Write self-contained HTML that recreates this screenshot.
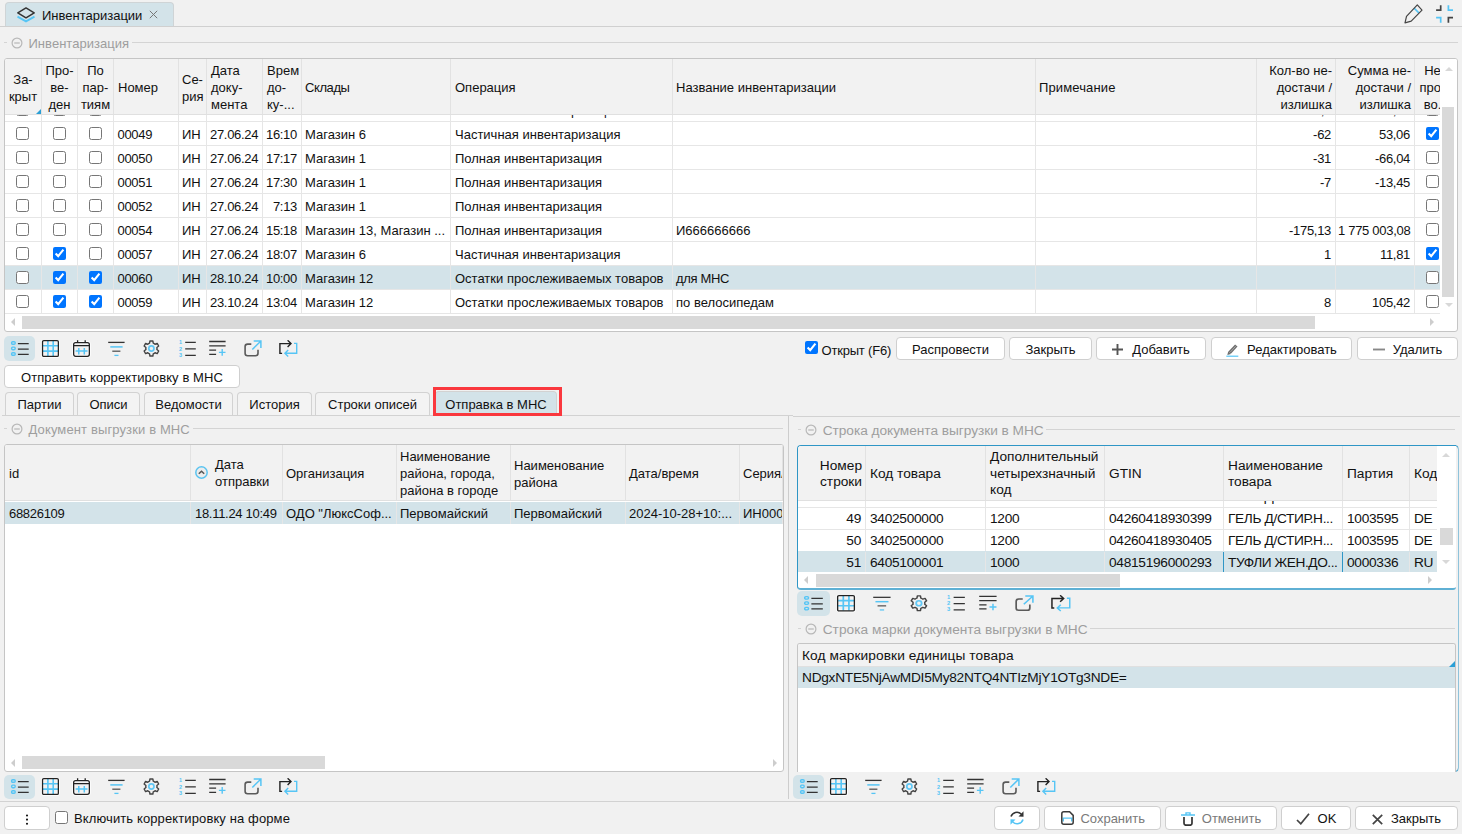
<!DOCTYPE html>
<html><head><meta charset="utf-8"><title>Инвентаризации</title>
<style>
*{box-sizing:border-box;margin:0;padding:0}
html,body{width:1462px;height:834px;overflow:hidden;background:#f1f1f1}
body{position:relative;font-family:"Liberation Sans",sans-serif;font-size:13px;color:#111;line-height:17px}
.abs,.sel,.ic,.lgline,.lgic,.lgtx,.btn,.tab,.tbl,.hc,.c,.row,.vl,.hl,.cb,.txt,.sb{position:absolute}
.sel{background:#d3e3e9;border-radius:5px}
.ic svg,.abs>svg,.lgic svg{display:block}
.lgline{height:1px;background:#d4d4d4}
.lgtx{color:#9e9e9e;font-size:13px;white-space:nowrap;line-height:17px}
.btn{height:23px;background:#fff;border:1px solid #cfcfcf;border-radius:4px;white-space:nowrap;line-height:21px;text-align:center;padding-top:1px}
.btn.dis{color:#7a7a7a}
.tab{height:23px;border:1px solid #d2d2d2;border-bottom:none;border-radius:4px 4px 0 0;background:#f3f3f3;white-space:nowrap;line-height:23px;text-align:center}
.tbl{background:#fff;border:1px solid #c5c5c5;border-radius:3px;overflow:hidden}
.hd{position:absolute;left:0;top:0;background:#f2f2f2;border-bottom:1px solid #e0e0e0}
.hc{top:0;padding-top:4px;border-right:1px solid #e2e2e2;display:flex;align-items:center;padding:0 3px 0 4px;overflow:hidden;white-space:nowrap}
.hc.ctr{justify-content:center;text-align:center;padding:0}
.hc.rt{justify-content:flex-end;text-align:right}
.row{left:0;border-bottom:1px solid #e6e6e6}
.row.s{background:#d3e3e9}
.c{top:0;height:100%;border-right:1px solid #e6e6e6;padding:0 2px 0 4px;white-space:nowrap;overflow:hidden}
.c.ell{text-overflow:ellipsis}
.c.p5,.hc.p5{padding-left:4px}
.c.p3,.hc.p3{padding-left:3px}
.c.r3{padding-right:3px}
.c.p35{padding-left:3.5px}
.row.t{border-bottom:none;border-top:1px solid #e6e6e6}
.c.foc{box-shadow:-1px 0 0 #2f96c6;border-right-color:#2f96c6}
.row.t.s{border-top-color:#d3e3e9}
.bi{display:inline-block;vertical-align:-2px;margin-right:8px}
.c.r{text-align:right;padding:0 4px 0 2px}
.cb{width:13px;height:13px;margin:0}
.sb{background:#d9d9d9}
.txt{white-space:nowrap}
.num{letter-spacing:-0.3px}
.dn1 .hc>div{position:relative;top:1px}
.big{font-size:13.7px}
.big .hc{line-height:16.5px}
.big .num{letter-spacing:-0.28px}
</style></head><body>

<div class="abs" style="left:0;top:26px;width:1462px;height:1px;background:#d0d0d0"></div>
<div class="abs" style="left:5px;top:2px;width:169px;height:24px;background:#d3e3e9;border:1px solid #cfd4d6;border-bottom:none;border-radius:4px 4px 0 0"></div>
<div class="abs" style="left:16px;top:6px"><svg width="20" height="18" viewBox="0 0 20 18"><path d="M1.500 10.600L10 15.400L18.500 10.600" fill="none" stroke="#56c5f5" stroke-width="1.800"/><path d="M10 1.900L18.200 6.800L10 11.800L1.800 6.800Z" fill="none" stroke="#333" stroke-width="1.500" stroke-linejoin="round"/></svg></div>
<div class="txt" style="left:42px;top:7px;font-size:13px">Инвентаризации</div>
<div class="abs" style="left:149px;top:10px"><svg width="9" height="9" viewBox="0 0 9 9"><path d="M0.800 0.800L8.200 8.200M8.200 0.800L0.800 8.200" stroke="#777" stroke-width="1"/></svg></div>
<div class="abs" style="left:1403px;top:4px"><svg width="21" height="21" viewBox="0 0 21 21"><path d="M11.100 4.100L16.100 9.100" stroke="#56c5f5" stroke-width="1.500" fill="none"/><path d="M14.300 0.900L19 6.100L8.200 17.200L2 18.900L3.500 12.300Z" fill="none" stroke="#444" stroke-width="1.200" stroke-linejoin="round"/></svg></div>
<div class="abs" style="left:1435px;top:4px"><svg width="19" height="20" viewBox="0 0 19 20"><g fill="none" stroke-width="1.700"><path d="M1.100 6.100H5.700V1.200" stroke="#444"/><path d="M18 6.100H13.400V1.200" stroke="#56c5f5"/><path d="M1.100 13.700H5.700V18.700" stroke="#56c5f5"/><path d="M18 13.700H13.400V18.700" stroke="#444"/></g></svg></div>
<div class="lgline" style="left:4px;top:42px;width:3px"></div>
<div class="lgic" style="left:11px;top:37px"><svg width="12" height="12" viewBox="0 0 12 12"><circle cx="6" cy="6" r="4.900" fill="none" stroke="#b8b8b8" stroke-width="1.200"/><path d="M3.200 6H8.800" stroke="#b8b8b8" stroke-width="1.200"/></svg></div>
<div class="lgtx" style="left:28.5px;top:35px"><span style="letter-spacing:0.031px">Инвентаризация</span></div>
<div class="lgline" style="left:132px;top:42px;width:1326px"></div>
<div class="tbl dn1" style="left:4px;top:58px;width:1454px;height:274px">
<div class="row" style="top:39px;width:1435px;height:24px;line-height:25px">
<div class="c" style="left:0px;width:37px;padding:0"><input type="checkbox" class="cb" style="left:11px;top:5px"></div>
<div class="c" style="left:37px;width:36px;padding:0"><input type="checkbox" class="cb" style="left:11px;top:5px"></div>
<div class="c" style="left:73px;width:36px;padding:0"><input type="checkbox" class="cb" style="left:11px;top:5px"></div>
<div class="c p35 num" style="left:109px;width:65px">00048</div>
<div class="c p3" style="left:174px;width:28px">ИН</div>
<div class="c p3 num" style="left:202px;width:56px">27.06.24</div>
<div class="c r r3 num" style="left:258px;width:39px">15:40</div>
<div class="c p3 ell" style="left:297px;width:149px">Магазин 6</div>
<div class="c " style="left:446px;width:222px">Частичная инвентаризация</div>
<div class="c p3" style="left:668px;width:363px"></div>
<div class="c p3" style="left:1031px;width:221px"></div>
<div class="c r num" style="left:1252px;width:79px">-4,5</div>
<div class="c r num" style="left:1331px;width:79px">-7,21</div>
<div class="c" style="left:1410px;width:36px;padding:0;border-right:none"><input type="checkbox" class="cb" style="left:11px;top:5px"></div>
</div>
<div class="row" style="top:63px;width:1435px;height:24px;line-height:25px">
<div class="c" style="left:0px;width:37px;padding:0"><input type="checkbox" class="cb" style="left:11px;top:5px"></div>
<div class="c" style="left:37px;width:36px;padding:0"><input type="checkbox" class="cb" style="left:11px;top:5px"></div>
<div class="c" style="left:73px;width:36px;padding:0"><input type="checkbox" class="cb" style="left:11px;top:5px"></div>
<div class="c p35 num" style="left:109px;width:65px">00049</div>
<div class="c p3" style="left:174px;width:28px">ИН</div>
<div class="c p3 num" style="left:202px;width:56px">27.06.24</div>
<div class="c r r3 num" style="left:258px;width:39px">16:10</div>
<div class="c p3 ell" style="left:297px;width:149px">Магазин 6</div>
<div class="c " style="left:446px;width:222px">Частичная инвентаризация</div>
<div class="c p3" style="left:668px;width:363px"></div>
<div class="c p3" style="left:1031px;width:221px"></div>
<div class="c r num" style="left:1252px;width:79px">-62</div>
<div class="c r num" style="left:1331px;width:79px">53,06</div>
<div class="c" style="left:1410px;width:36px;padding:0;border-right:none"><input type="checkbox" class="cb" style="left:11px;top:5px" checked></div>
</div>
<div class="row" style="top:87px;width:1435px;height:24px;line-height:25px">
<div class="c" style="left:0px;width:37px;padding:0"><input type="checkbox" class="cb" style="left:11px;top:5px"></div>
<div class="c" style="left:37px;width:36px;padding:0"><input type="checkbox" class="cb" style="left:11px;top:5px"></div>
<div class="c" style="left:73px;width:36px;padding:0"><input type="checkbox" class="cb" style="left:11px;top:5px"></div>
<div class="c p35 num" style="left:109px;width:65px">00050</div>
<div class="c p3" style="left:174px;width:28px">ИН</div>
<div class="c p3 num" style="left:202px;width:56px">27.06.24</div>
<div class="c r r3 num" style="left:258px;width:39px">17:17</div>
<div class="c p3 ell" style="left:297px;width:149px">Магазин 1</div>
<div class="c " style="left:446px;width:222px">Полная инвентаризация</div>
<div class="c p3" style="left:668px;width:363px"></div>
<div class="c p3" style="left:1031px;width:221px"></div>
<div class="c r num" style="left:1252px;width:79px">-31</div>
<div class="c r num" style="left:1331px;width:79px">-66,04</div>
<div class="c" style="left:1410px;width:36px;padding:0;border-right:none"><input type="checkbox" class="cb" style="left:11px;top:5px"></div>
</div>
<div class="row" style="top:111px;width:1435px;height:24px;line-height:25px">
<div class="c" style="left:0px;width:37px;padding:0"><input type="checkbox" class="cb" style="left:11px;top:5px"></div>
<div class="c" style="left:37px;width:36px;padding:0"><input type="checkbox" class="cb" style="left:11px;top:5px"></div>
<div class="c" style="left:73px;width:36px;padding:0"><input type="checkbox" class="cb" style="left:11px;top:5px"></div>
<div class="c p35 num" style="left:109px;width:65px">00051</div>
<div class="c p3" style="left:174px;width:28px">ИН</div>
<div class="c p3 num" style="left:202px;width:56px">27.06.24</div>
<div class="c r r3 num" style="left:258px;width:39px">17:30</div>
<div class="c p3 ell" style="left:297px;width:149px">Магазин 1</div>
<div class="c " style="left:446px;width:222px">Полная инвентаризация</div>
<div class="c p3" style="left:668px;width:363px"></div>
<div class="c p3" style="left:1031px;width:221px"></div>
<div class="c r num" style="left:1252px;width:79px">-7</div>
<div class="c r num" style="left:1331px;width:79px">-13,45</div>
<div class="c" style="left:1410px;width:36px;padding:0;border-right:none"><input type="checkbox" class="cb" style="left:11px;top:5px"></div>
</div>
<div class="row" style="top:135px;width:1435px;height:24px;line-height:25px">
<div class="c" style="left:0px;width:37px;padding:0"><input type="checkbox" class="cb" style="left:11px;top:5px"></div>
<div class="c" style="left:37px;width:36px;padding:0"><input type="checkbox" class="cb" style="left:11px;top:5px"></div>
<div class="c" style="left:73px;width:36px;padding:0"><input type="checkbox" class="cb" style="left:11px;top:5px"></div>
<div class="c p35 num" style="left:109px;width:65px">00052</div>
<div class="c p3" style="left:174px;width:28px">ИН</div>
<div class="c p3 num" style="left:202px;width:56px">27.06.24</div>
<div class="c r r3 num" style="left:258px;width:39px">7:13</div>
<div class="c p3 ell" style="left:297px;width:149px">Магазин 1</div>
<div class="c " style="left:446px;width:222px">Полная инвентаризация</div>
<div class="c p3" style="left:668px;width:363px"></div>
<div class="c p3" style="left:1031px;width:221px"></div>
<div class="c r num" style="left:1252px;width:79px"></div>
<div class="c r num" style="left:1331px;width:79px"></div>
<div class="c" style="left:1410px;width:36px;padding:0;border-right:none"><input type="checkbox" class="cb" style="left:11px;top:5px"></div>
</div>
<div class="row" style="top:159px;width:1435px;height:24px;line-height:25px">
<div class="c" style="left:0px;width:37px;padding:0"><input type="checkbox" class="cb" style="left:11px;top:5px"></div>
<div class="c" style="left:37px;width:36px;padding:0"><input type="checkbox" class="cb" style="left:11px;top:5px"></div>
<div class="c" style="left:73px;width:36px;padding:0"><input type="checkbox" class="cb" style="left:11px;top:5px"></div>
<div class="c p35 num" style="left:109px;width:65px">00054</div>
<div class="c p3" style="left:174px;width:28px">ИН</div>
<div class="c p3 num" style="left:202px;width:56px">27.06.24</div>
<div class="c r r3 num" style="left:258px;width:39px">15:18</div>
<div class="c p3 ell" style="left:297px;width:149px">Магазин 13, Магазин ...</div>
<div class="c " style="left:446px;width:222px">Полная инвентаризация</div>
<div class="c p3" style="left:668px;width:363px">И666666666</div>
<div class="c p3" style="left:1031px;width:221px"></div>
<div class="c r num" style="left:1252px;width:79px">-175,13</div>
<div class="c r num" style="left:1331px;width:79px">1 775 003,08</div>
<div class="c" style="left:1410px;width:36px;padding:0;border-right:none"><input type="checkbox" class="cb" style="left:11px;top:5px"></div>
</div>
<div class="row" style="top:183px;width:1435px;height:24px;line-height:25px">
<div class="c" style="left:0px;width:37px;padding:0"><input type="checkbox" class="cb" style="left:11px;top:5px"></div>
<div class="c" style="left:37px;width:36px;padding:0"><input type="checkbox" class="cb" style="left:11px;top:5px" checked></div>
<div class="c" style="left:73px;width:36px;padding:0"><input type="checkbox" class="cb" style="left:11px;top:5px"></div>
<div class="c p35 num" style="left:109px;width:65px">00057</div>
<div class="c p3" style="left:174px;width:28px">ИН</div>
<div class="c p3 num" style="left:202px;width:56px">27.06.24</div>
<div class="c r r3 num" style="left:258px;width:39px">18:07</div>
<div class="c p3 ell" style="left:297px;width:149px">Магазин 6</div>
<div class="c " style="left:446px;width:222px">Частичная инвентаризация</div>
<div class="c p3" style="left:668px;width:363px"></div>
<div class="c p3" style="left:1031px;width:221px"></div>
<div class="c r num" style="left:1252px;width:79px">1</div>
<div class="c r num" style="left:1331px;width:79px">11,81</div>
<div class="c" style="left:1410px;width:36px;padding:0;border-right:none"><input type="checkbox" class="cb" style="left:11px;top:5px" checked></div>
</div>
<div class="row s" style="top:207px;width:1435px;height:24px;line-height:25px">
<div class="c" style="left:0px;width:37px;padding:0"><input type="checkbox" class="cb" style="left:11px;top:5px"></div>
<div class="c" style="left:37px;width:36px;padding:0"><input type="checkbox" class="cb" style="left:11px;top:5px" checked></div>
<div class="c" style="left:73px;width:36px;padding:0"><input type="checkbox" class="cb" style="left:11px;top:5px" checked></div>
<div class="c p35 num" style="left:109px;width:65px">00060</div>
<div class="c p3" style="left:174px;width:28px">ИН</div>
<div class="c p3 num" style="left:202px;width:56px">28.10.24</div>
<div class="c r r3 num" style="left:258px;width:39px">10:00</div>
<div class="c p3 ell" style="left:297px;width:149px">Магазин 12</div>
<div class="c " style="left:446px;width:222px">Остатки прослеживаемых товаров</div>
<div class="c p3" style="left:668px;width:363px"><span style="letter-spacing:-0.320px">для МНС</span></div>
<div class="c p3" style="left:1031px;width:221px"></div>
<div class="c r num" style="left:1252px;width:79px"></div>
<div class="c r num" style="left:1331px;width:79px"></div>
<div class="c" style="left:1410px;width:36px;padding:0;border-right:none"><input type="checkbox" class="cb" style="left:11px;top:5px"></div>
</div>
<div class="row" style="top:231px;width:1435px;height:24px;line-height:25px">
<div class="c" style="left:0px;width:37px;padding:0"><input type="checkbox" class="cb" style="left:11px;top:5px"></div>
<div class="c" style="left:37px;width:36px;padding:0"><input type="checkbox" class="cb" style="left:11px;top:5px" checked></div>
<div class="c" style="left:73px;width:36px;padding:0"><input type="checkbox" class="cb" style="left:11px;top:5px" checked></div>
<div class="c p35 num" style="left:109px;width:65px">00059</div>
<div class="c p3" style="left:174px;width:28px">ИН</div>
<div class="c p3 num" style="left:202px;width:56px">23.10.24</div>
<div class="c r r3 num" style="left:258px;width:39px">13:04</div>
<div class="c p3 ell" style="left:297px;width:149px">Магазин 12</div>
<div class="c " style="left:446px;width:222px">Остатки прослеживаемых товаров</div>
<div class="c p3" style="left:668px;width:363px">по велосипедам</div>
<div class="c p3" style="left:1031px;width:221px"></div>
<div class="c r num" style="left:1252px;width:79px">8</div>
<div class="c r num" style="left:1331px;width:79px">105,42</div>
<div class="c" style="left:1410px;width:36px;padding:0;border-right:none"><input type="checkbox" class="cb" style="left:11px;top:5px"></div>
</div>
<div class="hd" style="width:1435px;height:56px">
<div class="hc ctr" style="left:0px;width:37px;height:55px"><div>За-<br>крыт</div></div>
<div class="hc ctr" style="left:37px;width:36px;height:55px"><div>Про-<br>ве-<br>ден</div></div>
<div class="hc ctr" style="left:73px;width:36px;height:55px"><div>По<br>пар-<br>тиям</div></div>
<div class="hc " style="left:109px;width:65px;height:55px"><div>Номер</div></div>
<div class="hc p3" style="left:174px;width:28px;height:55px"><div>Се-<br>рия</div></div>
<div class="hc " style="left:202px;width:56px;height:55px"><div>Дата<br>доку-<br>мента</div></div>
<div class="hc " style="left:258px;width:39px;height:55px"><div>Врем<br>до-<br>ку-...</div></div>
<div class="hc p3" style="left:297px;width:149px;height:55px"><div><span style="letter-spacing:-0.411px">Склады</span></div></div>
<div class="hc " style="left:446px;width:222px;height:55px"><div>Операция</div></div>
<div class="hc p3" style="left:668px;width:363px;height:55px"><div>Название инвентаризации</div></div>
<div class="hc p3" style="left:1031px;width:221px;height:55px"><div><span style="letter-spacing:0.125px">Примечание</span></div></div>
<div class="hc rt" style="left:1252px;width:79px;height:55px"><div>Кол-во не-<br>достачи /<br>излишка</div></div>
<div class="hc rt" style="left:1331px;width:79px;height:55px"><div>Сумма не-<br>достачи /<br>излишка</div></div>
<div class="hc ctr" style="left:1410px;width:36px;height:55px"><div>Не<br>про-<br>&nbsp;во..</div></div>
<svg class="abs" style="left:31px;top:50px" width="5" height="5"><polygon points="5,0 5,5 0,5" fill="#2a9fd6"/></svg>
</div>
<div class="abs" style="left:1435px;top:0;width:17px;height:255px;background:#fff"></div>
<div class="sb" style="left:1437px;top:48px;width:12px;height:190px"></div>
<svg class="abs" style="left:1440px;top:8px" width="8" height="4"><polygon points="0,4 8,4 4,0" fill="#d8d8d8"/></svg>
<svg class="abs" style="left:1440px;top:244px" width="8" height="4"><polygon points="0,0 8,0 4,4" fill="#d8d8d8"/></svg>
<div class="sb" style="left:17px;top:257px;width:1293px;height:13px"></div>
<svg class="abs" style="left:6px;top:259px" width="4" height="8"><polygon points="4,0 4,8 0,4" fill="#cdcdcd"/></svg>
<svg class="abs" style="left:1425px;top:259px" width="4" height="8"><polygon points="0,0 0,8 4,4" fill="#cdcdcd"/></svg>
</div>
<div class="sel" style="left:4px;top:336px;width:31px;height:25px"></div>
<div class="ic" style="left:10px;top:340px"><svg width="20" height="18" viewBox="0 0 20 18"><g fill="none" stroke="#56c5f5" stroke-width="1.400"><rect x="1.600" y="1.700" width="3.600" height="2.600" rx="1.100"/><rect x="1.600" y="7.100" width="3.600" height="2.600" rx="1.100"/><rect x="1.600" y="12.700" width="3.600" height="2.600" rx="1.100"/></g><g stroke="#333" stroke-width="1.300"><path d="M7.900 3.600H18.700M7.900 9.100H18.700M7.900 14.400H18.700"/></g></svg></div>
<div class="ic" style="left:41px;top:340px"><svg width="20" height="18" viewBox="0 0 20 18"><rect x="1.550" y="0.650" width="15.800" height="15.700" rx="1.200" fill="none" stroke="#fff" stroke-width="3.200" opacity="0.750"/><g stroke="#56c5f5" stroke-width="1.600"><path d="M6.900 1V16M12.200 1V16M2 5.800H17M2 11.100H17"/></g><rect x="1.550" y="0.650" width="15.800" height="15.700" rx="1.200" fill="none" stroke="#222" stroke-width="1.300"/></svg></div>
<div class="ic" style="left:72px;top:340px"><svg width="20" height="18" viewBox="0 0 20 18"><rect x="1.650" y="2.550" width="15.700" height="13.800" rx="2" fill="none" stroke="#fff" stroke-width="3.200" opacity="0.750"/><g stroke="#56c5f5" stroke-width="1.500" fill="none"><path d="M3.600 11.100H15.500M6.800 8V14.500M12.300 8V14.500"/></g><g fill="none" stroke="#222" stroke-width="1.300"><rect x="1.650" y="2.550" width="15.700" height="13.800" rx="2"/><path d="M1.650 5.700H17.350M5.600 0.200V2.600M13.200 0.200V2.600"/></g></svg></div>
<div class="ic" style="left:108px;top:340px"><svg width="20" height="18" viewBox="0 0 20 18"><g fill="none" stroke-width="1.300"><path d="M0.200 2.400H16.600" stroke="#333"/><path d="M2.300 6.900H14.600" stroke="#56c5f5" stroke-width="1.500"/><path d="M4.300 11.200H12.400" stroke="#555"/><path d="M6.400 15.400H10.500" stroke="#56c5f5"/></g></svg></div>
<div class="ic" style="left:143px;top:340px"><svg width="20" height="18" viewBox="0 0 20 18"><circle cx="8.400" cy="8.500" r="2.600" fill="none" stroke="#62c8f5" stroke-width="1.700"/><path fill="none" stroke="#444" stroke-width="1.400" stroke-linejoin="round" d="M6.58 3.21L6.93 0.94L9.87 0.94L10.22 3.21A5.6 5.6 0 0 1 12.07 4.27L14.21 3.45L15.68 5.99L13.90 7.43A5.6 5.6 0 0 1 13.90 9.57L15.68 11.01L14.21 13.55L12.07 12.73A5.6 5.6 0 0 1 10.22 13.79L9.87 16.06L6.93 16.06L6.58 13.79A5.6 5.6 0 0 1 4.73 12.73L2.59 13.55L1.12 11.01L2.90 9.57A5.6 5.6 0 0 1 2.90 7.43L1.12 5.99L2.59 3.45L4.73 4.27A5.6 5.6 0 0 1 6.58 3.21Z"/></svg></div>
<div class="ic" style="left:178px;top:340px"><svg width="20" height="18" viewBox="0 0 20 18"><g fill="#56c5f5" font-family="Liberation Sans" font-weight="bold" font-size="5.500px"><text x="1" y="4.100">1</text><text x="1" y="10.600">2</text><text x="1" y="17">3</text></g><g stroke="#333" stroke-width="1.300"><path d="M7.200 2.400H17.800M7.200 8.900H17.800M7.200 15.400H17.800"/></g></svg></div>
<div class="ic" style="left:209px;top:340px"><svg width="20" height="18" viewBox="0 0 20 18"><g stroke="#333" stroke-width="1.300"><path d="M0.200 1.500H16.600M0.200 5.800H16.600M0.200 10.100H7.100M0.200 14.400H7.100"/></g><g stroke="#56c5f5" stroke-width="1.400"><path d="M9.900 12.400H16.500M13.200 9.100V15.700"/></g></svg></div>
<div class="ic" style="left:244px;top:340px"><svg width="20" height="18" viewBox="0 0 20 18"><path d="M7.300 4.100H3.600Q1.100 4.100 1.100 6.600V13.300Q1.100 15.800 3.600 15.800H11.500Q14 15.800 14 13.300V9.800" fill="none" stroke="#5a5a5a" stroke-width="1.600"/><g fill="none" stroke="#56c5f5" stroke-width="1.500"><path d="M8.300 9.500L16.700 1.200M9.700 1.100H16.900V8"/></g></svg></div>
<div class="ic" style="left:279px;top:340px"><svg width="20" height="18" viewBox="0 0 20 18"><g fill="none" stroke="#222" stroke-width="1.400"><path d="M3.100 13.400H0.900V3.600H11.800M8.600 0.300L12 3.600L8.600 6.900"/></g><g fill="none" stroke="#56c5f5" stroke-width="1.400"><path d="M15 3.400H17.700V13.300H6M9.200 10.100L5.900 13.300L9.200 16.500"/></g></svg></div>
<input type="checkbox" class="cb" style="left:805px;top:341px" checked>
<div class="txt" style="left:821.500px;top:342px"><span style="letter-spacing:-0.194px">Открыт (F6)</span></div>
<div class="btn " style="left:896px;top:337px;width:109px">Распровести</div>
<div class="btn " style="left:1009px;top:337px;width:83px">Закрыть</div>
<div class="btn " style="left:1096px;top:337px;width:110px"><svg class="bi" style="vertical-align:-0.500px;margin-right:9px" width="11" height="11" viewBox="0 0 11 11"><path d="M5.500 0V11M0 5.500H11" stroke="#555" stroke-width="1.900"/></svg>Добавить</div>
<div class="btn " style="left:1211px;top:337px;width:141px"><svg class="bi" style="vertical-align:-2.500px;margin-right:8px" width="13" height="14" viewBox="0 0 13 14"><path d="M0.300 13.200H12.300" stroke="#56c5f5" stroke-width="1.200"/><path d="M3.700 9.700L10.300 2.500" stroke="#6e6e6e" stroke-width="3.300"/><path d="M1.300 12L2.300 8.300L5 10.900Z" fill="#6e6e6e"/><path d="M4.300 9.100L9.700 3.200" stroke="#b5b5b5" stroke-width="0.800"/></svg>Редактировать</div>
<div class="btn " style="left:1357px;top:337px;width:101px"><svg class="bi" style="vertical-align:-0.500px;margin-right:8px" width="12" height="11" viewBox="0 0 12 11"><path d="M0 5.500H12" stroke="#888" stroke-width="1.900"/></svg>Удалить</div>
<div class="btn " style="left:4px;top:365px;width:236px"><span style="letter-spacing:0.093px">Отправить корректировку в МНС</span></div>
<div class="abs" style="left:2px;top:415px;width:791px;height:1px;background:#d2d2d2"></div><div class="abs" style="left:793px;top:416px;width:667px;height:1px;background:#d2d2d2"></div>
<div class="tab" style="left:5px;top:392px;width:69px;">Партии</div>
<div class="tab" style="left:77px;top:392px;width:63px;">Описи</div>
<div class="tab" style="left:144px;top:392px;width:89px;">Ведомости</div>
<div class="tab" style="left:237px;top:392px;width:75px;">История</div>
<div class="tab" style="left:315px;top:392px;width:115px;">Строки описей</div>
<div class="tab" style="left:435px;top:391px;width:122px;height:25px;background:#d3e3e9;line-height:25px">Отправка в МНС</div>
<div class="abs" style="left:433px;top:387px;width:129px;height:29px;border:3px solid #fa383e"></div>
<div class="lgline" style="left:4px;top:428px;width:3px"></div>
<div class="lgic" style="left:11px;top:423px"><svg width="12" height="12" viewBox="0 0 12 12"><circle cx="6" cy="6" r="4.900" fill="none" stroke="#b8b8b8" stroke-width="1.200"/><path d="M3.200 6H8.800" stroke="#b8b8b8" stroke-width="1.200"/></svg></div>
<div class="lgtx" style="left:28.5px;top:421px"><span style="letter-spacing:0.125px">Документ выгрузки в МНС</span></div>
<div class="lgline" style="left:193px;top:428px;width:590px"></div>
<div class="tbl dn1" style="left:4px;top:444px;width:780px;height:328px">
<div class="row s" style="top:57px;width:778px;height:22px;line-height:23px;border:none">
<div class="c p5 num" style="left:0px;width:186px">68826109</div>
<div class="c p5 num" style="left:186px;width:92px">18.11.24 10:49</div>
<div class="c p3 ell" style="left:278px;width:114px">ОДО "ЛюксСоф...</div>
<div class="c p3" style="left:392px;width:114px">Первомайский</div>
<div class="c p3" style="left:506px;width:115px">Первомайский</div>
<div class="c p3 ell" style="left:621px;width:114px">2024-10-28+10:...</div>
<div class="c p3" style="left:735px;width:43px">ИН000060</div>
</div>
<div class="hd" style="width:778px;height:56px">
<div class="hc p5" style="left:0px;width:186px;height:55px"><div>id</div></div>
<div class="hc" style="left:186px;width:92px;height:55px;padding-left:4px"><svg width="13" height="13" viewBox="0 0 13 13" style="flex:none;margin-right:7px;margin-top:-1px"><circle cx="6.500" cy="6.500" r="5.700" fill="#ececec" stroke="#5bc4f0" stroke-width="1.500"/><path d="M3.800 7.800L6.500 5.200L9.200 7.800" fill="none" stroke="#555" stroke-width="1.500"/></svg><div style="top:0">Дата<br>отправки</div></div>
<div class="hc p3" style="left:278px;width:114px;height:55px"><div>Организация</div></div>
<div class="hc p3" style="left:392px;width:114px;height:55px"><div>Наименование<br>района, города,<br>района в городе</div></div>
<div class="hc p3" style="left:506px;width:115px;height:55px"><div>Наименование<br>района</div></div>
<div class="hc p3" style="left:621px;width:114px;height:55px"><div>Дата/время</div></div>
<div class="hc p3" style="left:735px;width:43px;height:55px"><div>Серия/номер</div></div>
</div>
<div class="sb" style="left:17px;top:311px;width:303px;height:13px"></div>
<svg class="abs" style="left:6px;top:314px" width="4" height="8"><polygon points="4,0 4,8 0,4" fill="#cdcdcd"/></svg>
<svg class="abs" style="left:768px;top:314px" width="4" height="8"><polygon points="0,0 0,8 4,4" fill="#cdcdcd"/></svg>
</div>
<div class="sel" style="left:4px;top:775px;width:31px;height:24px"></div>
<div class="ic" style="left:10px;top:778px"><svg width="20" height="18" viewBox="0 0 20 18"><g fill="none" stroke="#56c5f5" stroke-width="1.400"><rect x="1.600" y="1.700" width="3.600" height="2.600" rx="1.100"/><rect x="1.600" y="7.100" width="3.600" height="2.600" rx="1.100"/><rect x="1.600" y="12.700" width="3.600" height="2.600" rx="1.100"/></g><g stroke="#333" stroke-width="1.300"><path d="M7.900 3.600H18.700M7.900 9.100H18.700M7.900 14.400H18.700"/></g></svg></div>
<div class="ic" style="left:41px;top:778px"><svg width="20" height="18" viewBox="0 0 20 18"><rect x="1.550" y="0.650" width="15.800" height="15.700" rx="1.200" fill="none" stroke="#fff" stroke-width="3.200" opacity="0.750"/><g stroke="#56c5f5" stroke-width="1.600"><path d="M6.900 1V16M12.200 1V16M2 5.800H17M2 11.100H17"/></g><rect x="1.550" y="0.650" width="15.800" height="15.700" rx="1.200" fill="none" stroke="#222" stroke-width="1.300"/></svg></div>
<div class="ic" style="left:72px;top:778px"><svg width="20" height="18" viewBox="0 0 20 18"><rect x="1.650" y="2.550" width="15.700" height="13.800" rx="2" fill="none" stroke="#fff" stroke-width="3.200" opacity="0.750"/><g stroke="#56c5f5" stroke-width="1.500" fill="none"><path d="M3.600 11.100H15.500M6.800 8V14.500M12.300 8V14.500"/></g><g fill="none" stroke="#222" stroke-width="1.300"><rect x="1.650" y="2.550" width="15.700" height="13.800" rx="2"/><path d="M1.650 5.700H17.350M5.600 0.200V2.600M13.200 0.200V2.600"/></g></svg></div>
<div class="ic" style="left:108px;top:778px"><svg width="20" height="18" viewBox="0 0 20 18"><g fill="none" stroke-width="1.300"><path d="M0.200 2.400H16.600" stroke="#333"/><path d="M2.300 6.900H14.600" stroke="#56c5f5" stroke-width="1.500"/><path d="M4.300 11.200H12.400" stroke="#555"/><path d="M6.400 15.400H10.500" stroke="#56c5f5"/></g></svg></div>
<div class="ic" style="left:143px;top:778px"><svg width="20" height="18" viewBox="0 0 20 18"><circle cx="8.400" cy="8.500" r="2.600" fill="none" stroke="#62c8f5" stroke-width="1.700"/><path fill="none" stroke="#444" stroke-width="1.400" stroke-linejoin="round" d="M6.58 3.21L6.93 0.94L9.87 0.94L10.22 3.21A5.6 5.6 0 0 1 12.07 4.27L14.21 3.45L15.68 5.99L13.90 7.43A5.6 5.6 0 0 1 13.90 9.57L15.68 11.01L14.21 13.55L12.07 12.73A5.6 5.6 0 0 1 10.22 13.79L9.87 16.06L6.93 16.06L6.58 13.79A5.6 5.6 0 0 1 4.73 12.73L2.59 13.55L1.12 11.01L2.90 9.57A5.6 5.6 0 0 1 2.90 7.43L1.12 5.99L2.59 3.45L4.73 4.27A5.6 5.6 0 0 1 6.58 3.21Z"/></svg></div>
<div class="ic" style="left:178px;top:778px"><svg width="20" height="18" viewBox="0 0 20 18"><g fill="#56c5f5" font-family="Liberation Sans" font-weight="bold" font-size="5.500px"><text x="1" y="4.100">1</text><text x="1" y="10.600">2</text><text x="1" y="17">3</text></g><g stroke="#333" stroke-width="1.300"><path d="M7.200 2.400H17.800M7.200 8.900H17.800M7.200 15.400H17.800"/></g></svg></div>
<div class="ic" style="left:209px;top:778px"><svg width="20" height="18" viewBox="0 0 20 18"><g stroke="#333" stroke-width="1.300"><path d="M0.200 1.500H16.600M0.200 5.800H16.600M0.200 10.100H7.100M0.200 14.400H7.100"/></g><g stroke="#56c5f5" stroke-width="1.400"><path d="M9.900 12.400H16.500M13.200 9.100V15.700"/></g></svg></div>
<div class="ic" style="left:244px;top:778px"><svg width="20" height="18" viewBox="0 0 20 18"><path d="M7.300 4.100H3.600Q1.100 4.100 1.100 6.600V13.300Q1.100 15.800 3.600 15.800H11.500Q14 15.800 14 13.300V9.800" fill="none" stroke="#5a5a5a" stroke-width="1.600"/><g fill="none" stroke="#56c5f5" stroke-width="1.500"><path d="M8.300 9.500L16.700 1.200M9.700 1.100H16.900V8"/></g></svg></div>
<div class="ic" style="left:279px;top:778px"><svg width="20" height="18" viewBox="0 0 20 18"><g fill="none" stroke="#222" stroke-width="1.400"><path d="M3.100 13.400H0.900V3.600H11.800M8.600 0.300L12 3.600L8.600 6.900"/></g><g fill="none" stroke="#56c5f5" stroke-width="1.400"><path d="M15 3.400H17.700V13.300H6M9.200 10.100L5.900 13.300L9.200 16.500"/></g></svg></div>
<div class="abs" style="left:788px;top:416px;width:1px;height:383px;background:#cdcdcd"></div>
<div class="lgline" style="left:798.2px;top:429px;width:3px"></div>
<div class="lgic" style="left:805.2px;top:424px"><svg width="12" height="12" viewBox="0 0 12 12"><circle cx="6" cy="6" r="4.900" fill="none" stroke="#b8b8b8" stroke-width="1.200"/><path d="M3.200 6H8.800" stroke="#b8b8b8" stroke-width="1.200"/></svg></div>
<div class="lgtx" style="left:822.7px;top:422px"><span style="font-size:13.7px;letter-spacing:-0.032px">Строка документа выгрузки в МНС</span></div>
<div class="lgline" style="left:1046.2px;top:429px;width:408.79999999999995px"></div>
<div class="abs" style="left:797px;top:445px;width:661.500px;height:327px;border:1.500px solid #2f96c6;border-radius:4px;clip-path:inset(0 0 0 655px)"></div>
<div class="tbl big dn1" style="left:797px;top:445px;width:659px;height:145px;border-color:#2f96c6;border-right:none;border-bottom:2px solid #5fb0d4;border-radius:4px 0 3px 4px">
<div class="row t" style="top:39px;width:639px;height:22px;line-height:21px">
<div class="c r num" style="left:0px;width:68px">48</div>
<div class="c num" style="left:68px;width:120px">3402500000</div>
<div class="c num" style="left:188px;width:119px">1200</div>
<div class="c num" style="left:307px;width:119px">04014820000000</div>
<div class="c " style="left:426px;width:119px"><span style="font-size:13.7px;letter-spacing:-0.354px">ГЕЛЬ Д/СТИР.Н...</span></div>
<div class="c num" style="left:545px;width:67px">1003595</div>
<div class="c num" style="left:612px;width:36px">DE</div>
</div>
<div class="row t" style="top:61px;width:639px;height:22px;line-height:21px">
<div class="c r num" style="left:0px;width:68px">49</div>
<div class="c num" style="left:68px;width:120px">3402500000</div>
<div class="c num" style="left:188px;width:119px">1200</div>
<div class="c num" style="left:307px;width:119px">04260418930399</div>
<div class="c " style="left:426px;width:119px"><span style="font-size:13.7px;letter-spacing:-0.354px">ГЕЛЬ Д/СТИР.Н...</span></div>
<div class="c num" style="left:545px;width:67px">1003595</div>
<div class="c num" style="left:612px;width:36px">DE</div>
</div>
<div class="row t" style="top:83px;width:639px;height:22px;line-height:21px">
<div class="c r num" style="left:0px;width:68px">50</div>
<div class="c num" style="left:68px;width:120px">3402500000</div>
<div class="c num" style="left:188px;width:119px">1200</div>
<div class="c num" style="left:307px;width:119px">04260418930405</div>
<div class="c " style="left:426px;width:119px"><span style="font-size:13.7px;letter-spacing:-0.354px">ГЕЛЬ Д/СТИР.Н...</span></div>
<div class="c num" style="left:545px;width:67px">1003595</div>
<div class="c num" style="left:612px;width:36px">DE</div>
</div>
<div class="row t s" style="top:105px;width:639px;height:21px;line-height:21px">
<div class="c r num" style="left:0px;width:68px">51</div>
<div class="c num" style="left:68px;width:120px">6405100001</div>
<div class="c num" style="left:188px;width:119px">1000</div>
<div class="c num" style="left:307px;width:119px">04815196000293</div>
<div class="c  foc" style="left:426px;width:119px"><span style="font-size:13.7px;letter-spacing:-0.431px">ТУФЛИ ЖЕН.ДО...</span></div>
<div class="c num" style="left:545px;width:67px">0000336</div>
<div class="c num" style="left:612px;width:36px">RU</div>
</div>
<div class="hd" style="width:639px;height:55px">
<div class="hc rt" style="left:0px;width:68px;height:54px"><div>Номер<br>строки</div></div>
<div class="hc " style="left:68px;width:120px;height:54px"><div>Код товара</div></div>
<div class="hc " style="left:188px;width:119px;height:54px"><div>Дополнительный<br>четырехзначный<br>код</div></div>
<div class="hc " style="left:307px;width:119px;height:54px"><div>GTIN</div></div>
<div class="hc " style="left:426px;width:119px;height:54px"><div>Наименование<br>товара</div></div>
<div class="hc " style="left:545px;width:67px;height:54px"><div>Партия</div></div>
<div class="hc " style="left:612px;width:36px;height:54px"><div>Код</div></div>
</div>
<div class="abs" style="left:639px;top:0;width:19px;height:127px;background:#fff"></div>
<div class="sb" style="left:642px;top:82px;width:13px;height:17px"></div>
<svg class="abs" style="left:644px;top:7px" width="8" height="4"><polygon points="0,4 8,4 4,0" fill="#d8d8d8"/></svg>
<svg class="abs" style="left:644px;top:114px" width="8" height="4"><polygon points="0,0 8,0 4,4" fill="#d8d8d8"/></svg>
<div class="sb" style="left:18px;top:128px;width:304px;height:13px"></div>
<svg class="abs" style="left:6px;top:130px" width="4" height="8"><polygon points="4,0 4,8 0,4" fill="#cdcdcd"/></svg>
<svg class="abs" style="left:630px;top:130px" width="4" height="8"><polygon points="0,0 0,8 4,4" fill="#cdcdcd"/></svg>
</div>
<div class="sel" style="left:797px;top:591px;width:32.5px;height:25px"></div>
<div class="ic" style="left:803.2px;top:595.2px"><svg preserveAspectRatio="none" width="21.20" height="17.46" viewBox="0 0 20 18"><g fill="none" stroke="#56c5f5" stroke-width="1.400"><rect x="1.600" y="1.700" width="3.600" height="2.600" rx="1.100"/><rect x="1.600" y="7.100" width="3.600" height="2.600" rx="1.100"/><rect x="1.600" y="12.700" width="3.600" height="2.600" rx="1.100"/></g><g stroke="#333" stroke-width="1.300"><path d="M7.900 3.600H18.700M7.900 9.100H18.700M7.900 14.400H18.700"/></g></svg></div>
<div class="ic" style="left:836.0px;top:595.2px"><svg preserveAspectRatio="none" width="21.20" height="17.46" viewBox="0 0 20 18"><rect x="1.550" y="0.650" width="15.800" height="15.700" rx="1.200" fill="none" stroke="#fff" stroke-width="3.200" opacity="0.750"/><g stroke="#56c5f5" stroke-width="1.600"><path d="M6.900 1V16M12.200 1V16M2 5.800H17M2 11.100H17"/></g><rect x="1.550" y="0.650" width="15.800" height="15.700" rx="1.200" fill="none" stroke="#222" stroke-width="1.300"/></svg></div>
<div class="ic" style="left:873.4px;top:595.2px"><svg preserveAspectRatio="none" width="21.20" height="17.46" viewBox="0 0 20 18"><g fill="none" stroke-width="1.300"><path d="M0.200 2.400H16.600" stroke="#333"/><path d="M2.300 6.900H14.600" stroke="#56c5f5" stroke-width="1.500"/><path d="M4.300 11.200H12.400" stroke="#555"/><path d="M6.400 15.400H10.500" stroke="#56c5f5"/></g></svg></div>
<div class="ic" style="left:909.6px;top:595.2px"><svg preserveAspectRatio="none" width="21.20" height="17.46" viewBox="0 0 20 18"><circle cx="8.400" cy="8.500" r="2.600" fill="none" stroke="#62c8f5" stroke-width="1.700"/><path fill="none" stroke="#444" stroke-width="1.400" stroke-linejoin="round" d="M6.58 3.21L6.93 0.94L9.87 0.94L10.22 3.21A5.6 5.6 0 0 1 12.07 4.27L14.21 3.45L15.68 5.99L13.90 7.43A5.6 5.6 0 0 1 13.90 9.57L15.68 11.01L14.21 13.55L12.07 12.73A5.6 5.6 0 0 1 10.22 13.79L9.87 16.06L6.93 16.06L6.58 13.79A5.6 5.6 0 0 1 4.73 12.73L2.59 13.55L1.12 11.01L2.90 9.57A5.6 5.6 0 0 1 2.90 7.43L1.12 5.99L2.59 3.45L4.73 4.27A5.6 5.6 0 0 1 6.58 3.21Z"/></svg></div>
<div class="ic" style="left:946.2px;top:595.2px"><svg preserveAspectRatio="none" width="21.20" height="17.46" viewBox="0 0 20 18"><g fill="#56c5f5" font-family="Liberation Sans" font-weight="bold" font-size="5.500px"><text x="1" y="4.100">1</text><text x="1" y="10.600">2</text><text x="1" y="17">3</text></g><g stroke="#333" stroke-width="1.300"><path d="M7.200 2.400H17.800M7.200 8.900H17.800M7.200 15.400H17.800"/></g></svg></div>
<div class="ic" style="left:978.7px;top:595.2px"><svg preserveAspectRatio="none" width="21.20" height="17.46" viewBox="0 0 20 18"><g stroke="#333" stroke-width="1.300"><path d="M0.200 1.500H16.600M0.200 5.800H16.600M0.200 10.100H7.100M0.200 14.400H7.100"/></g><g stroke="#56c5f5" stroke-width="1.400"><path d="M9.900 12.400H16.500M13.200 9.100V15.700"/></g></svg></div>
<div class="ic" style="left:1014.9px;top:595.2px"><svg preserveAspectRatio="none" width="21.20" height="17.46" viewBox="0 0 20 18"><path d="M7.300 4.100H3.600Q1.100 4.100 1.100 6.600V13.300Q1.100 15.800 3.600 15.800H11.500Q14 15.800 14 13.300V9.800" fill="none" stroke="#5a5a5a" stroke-width="1.600"/><g fill="none" stroke="#56c5f5" stroke-width="1.500"><path d="M8.300 9.500L16.700 1.200M9.700 1.100H16.900V8"/></g></svg></div>
<div class="ic" style="left:1050.9px;top:595.2px"><svg preserveAspectRatio="none" width="21.20" height="17.46" viewBox="0 0 20 18"><g fill="none" stroke="#222" stroke-width="1.400"><path d="M3.100 13.400H0.900V3.600H11.800M8.600 0.300L12 3.600L8.600 6.900"/></g><g fill="none" stroke="#56c5f5" stroke-width="1.400"><path d="M15 3.400H17.700V13.300H6M9.200 10.100L5.900 13.300L9.200 16.500"/></g></svg></div>
<div class="lgline" style="left:798.2px;top:628px;width:3px"></div>
<div class="lgic" style="left:805.2px;top:623px"><svg width="12" height="12" viewBox="0 0 12 12"><circle cx="6" cy="6" r="4.900" fill="none" stroke="#b8b8b8" stroke-width="1.200"/><path d="M3.200 6H8.800" stroke="#b8b8b8" stroke-width="1.200"/></svg></div>
<div class="lgtx" style="left:822.7px;top:621px"><span style="font-size:13.7px;letter-spacing:0.025px">Строка марки документа выгрузки в МНС</span></div>
<div class="lgline" style="left:1090.2px;top:628px;width:364.79999999999995px"></div>
<div class="tbl" style="left:797px;top:643px;width:659px;height:129px;border-radius:3px 3px 0 0;border-bottom:none">
<div class="row s" style="top:23px;width:657px;height:21px;line-height:21px;border:none"><div class="c" style="left:0;width:657px;border:none"><span style="font-size:13.7px;letter-spacing:-0.255px">NDgxNTE5NjAwMDI5My82NTQ4NTIzMjY1OTg3NDE=</span></div></div>
<div class="hd" style="width:657px;height:23px"><div class="hc" style="left:0;width:657px;height:22px;border:none"><div><span style="font-size:13.7px;letter-spacing:0.104px">Код маркировки единицы товара</span></div></div>
<svg class="abs" style="left:651px;top:17px" width="6" height="6"><polygon points="6,0 6,6 0,6" fill="#2a9fd6"/></svg></div>
</div>
<div class="sel" style="left:793px;top:775px;width:31px;height:24px"></div>
<div class="ic" style="left:799.3px;top:778.2px"><svg width="20" height="18" viewBox="0 0 20 18"><g fill="none" stroke="#56c5f5" stroke-width="1.400"><rect x="1.600" y="1.700" width="3.600" height="2.600" rx="1.100"/><rect x="1.600" y="7.100" width="3.600" height="2.600" rx="1.100"/><rect x="1.600" y="12.700" width="3.600" height="2.600" rx="1.100"/></g><g stroke="#333" stroke-width="1.300"><path d="M7.900 3.600H18.700M7.900 9.100H18.700M7.900 14.400H18.700"/></g></svg></div>
<div class="ic" style="left:829.2px;top:778.2px"><svg width="20" height="18" viewBox="0 0 20 18"><rect x="1.550" y="0.650" width="15.800" height="15.700" rx="1.200" fill="none" stroke="#fff" stroke-width="3.200" opacity="0.750"/><g stroke="#56c5f5" stroke-width="1.600"><path d="M6.900 1V16M12.200 1V16M2 5.800H17M2 11.100H17"/></g><rect x="1.550" y="0.650" width="15.800" height="15.700" rx="1.200" fill="none" stroke="#222" stroke-width="1.300"/></svg></div>
<div class="ic" style="left:865.3px;top:778.2px"><svg width="20" height="18" viewBox="0 0 20 18"><g fill="none" stroke-width="1.300"><path d="M0.200 2.400H16.600" stroke="#333"/><path d="M2.300 6.900H14.600" stroke="#56c5f5" stroke-width="1.500"/><path d="M4.300 11.200H12.400" stroke="#555"/><path d="M6.400 15.400H10.500" stroke="#56c5f5"/></g></svg></div>
<div class="ic" style="left:901.2px;top:778.2px"><svg width="20" height="18" viewBox="0 0 20 18"><circle cx="8.400" cy="8.500" r="2.600" fill="none" stroke="#62c8f5" stroke-width="1.700"/><path fill="none" stroke="#444" stroke-width="1.400" stroke-linejoin="round" d="M6.58 3.21L6.93 0.94L9.87 0.94L10.22 3.21A5.6 5.6 0 0 1 12.07 4.27L14.21 3.45L15.68 5.99L13.90 7.43A5.6 5.6 0 0 1 13.90 9.57L15.68 11.01L14.21 13.55L12.07 12.73A5.6 5.6 0 0 1 10.22 13.79L9.87 16.06L6.93 16.06L6.58 13.79A5.6 5.6 0 0 1 4.73 12.73L2.59 13.55L1.12 11.01L2.90 9.57A5.6 5.6 0 0 1 2.90 7.43L1.12 5.99L2.59 3.45L4.73 4.27A5.6 5.6 0 0 1 6.58 3.21Z"/></svg></div>
<div class="ic" style="left:936.1px;top:778.2px"><svg width="20" height="18" viewBox="0 0 20 18"><g fill="#56c5f5" font-family="Liberation Sans" font-weight="bold" font-size="5.500px"><text x="1" y="4.100">1</text><text x="1" y="10.600">2</text><text x="1" y="17">3</text></g><g stroke="#333" stroke-width="1.300"><path d="M7.200 2.400H17.800M7.200 8.900H17.800M7.200 15.400H17.800"/></g></svg></div>
<div class="ic" style="left:967.1px;top:778.2px"><svg width="20" height="18" viewBox="0 0 20 18"><g stroke="#333" stroke-width="1.300"><path d="M0.200 1.500H16.600M0.200 5.800H16.600M0.200 10.100H7.100M0.200 14.400H7.100"/></g><g stroke="#56c5f5" stroke-width="1.400"><path d="M9.900 12.400H16.500M13.200 9.100V15.700"/></g></svg></div>
<div class="ic" style="left:1001.9px;top:778.2px"><svg width="20" height="18" viewBox="0 0 20 18"><path d="M7.300 4.100H3.600Q1.100 4.100 1.100 6.600V13.300Q1.100 15.800 3.600 15.800H11.500Q14 15.800 14 13.300V9.800" fill="none" stroke="#5a5a5a" stroke-width="1.600"/><g fill="none" stroke="#56c5f5" stroke-width="1.500"><path d="M8.300 9.500L16.700 1.200M9.700 1.100H16.900V8"/></g></svg></div>
<div class="ic" style="left:1036.6px;top:778.2px"><svg width="20" height="18" viewBox="0 0 20 18"><g fill="none" stroke="#222" stroke-width="1.400"><path d="M3.100 13.400H0.900V3.600H11.800M8.600 0.300L12 3.600L8.600 6.900"/></g><g fill="none" stroke="#56c5f5" stroke-width="1.400"><path d="M15 3.400H17.700V13.300H6M9.200 10.100L5.900 13.300L9.200 16.500"/></g></svg></div>
<div class="abs" style="left:0;top:801px;width:1460px;height:1px;background:#d2d2d2"></div>
<div class="btn" style="left:4px;top:806px;width:46px;height:24px;padding:0"><svg width="4" height="12" viewBox="0 0 4 12" style="display:block;margin:7.300px auto 0"><circle cx="2" cy="1.500" r="1.050" fill="#111"/><circle cx="2" cy="5.600" r="1.050" fill="#111"/><circle cx="2" cy="9.700" r="1.050" fill="#111"/></svg></div>
<input type="checkbox" class="cb" style="left:55px;top:811px">
<div class="txt" style="left:74px;top:810px"><span style="letter-spacing:0.116px">Включить корректировку на форме</span></div>
<div class="btn " style="left:994px;top:806px;width:46px;height:24px;line-height:22px"><svg class="bi" style="margin-right:0;vertical-align:-1.800px" width="14" height="14" viewBox="0 0 14 14"><path d="M1 5.600A6.200 6.200 0 0 1 11.200 3" fill="none" stroke="#333" stroke-width="1.600"/><path d="M13.500 0.200V5.800L8.500 5.500Z" fill="#333"/><path d="M13 8.400A6.200 6.200 0 0 1 2.800 11" fill="none" stroke="#56c5f5" stroke-width="1.600"/><path d="M0.500 13.800V8.200L5.500 8.500Z" fill="#56c5f5"/></svg></div>
<div class="btn dis" style="left:1044px;top:806px;width:117px;height:24px;line-height:22px"><svg class="bi" style="vertical-align:-1.700px;margin-left:1.500px;margin-right:6px" width="13" height="14" viewBox="0 0 13 14"><path d="M2.300 10.600V7.200H10.700V10.600" fill="none" stroke="#56c5f5" stroke-width="1.300"/><path d="M2.800 0.800H8.600L12.200 4.400V11.200Q12.200 13.200 10.200 13.200H2.800Q0.800 13.200 0.800 11.200V2.800Q0.800 0.800 2.800 0.800Z" fill="none" stroke="#3a3a3a" stroke-width="1.500"/></svg>Сохранить</div>
<div class="btn dis" style="left:1165px;top:806px;width:112px;height:24px;line-height:22px"><svg class="bi" style="vertical-align:-2.500px;margin-right:7px" width="14" height="14" viewBox="0 0 14 14"><path d="M0 3H14M5 2.800V0.900H9V2.800" fill="none" stroke="#56c5f5" stroke-width="1.400"/><path d="M3 5V11.300Q3 13.200 4.900 13.200H9.100Q11 13.200 11 11.300V5" fill="none" stroke="#333" stroke-width="1.700"/></svg>Отменить</div>
<div class="btn " style="left:1281px;top:806px;width:70px;height:24px;line-height:22px"><svg class="bi" style="vertical-align:-2px;margin-right:8px" width="14" height="12" viewBox="0 0 14 12"><path d="M1 7L4.800 10.800L13 0.800" fill="none" stroke="#444" stroke-width="1.700"/></svg>OK</div>
<div class="btn " style="left:1355px;top:806px;width:103px;height:24px;line-height:22px"><svg class="bi" style="vertical-align:-1.500px;margin-right:8px" width="11" height="11" viewBox="0 0 11 11"><path d="M0.800 0.800L10.200 10.200M10.200 0.800L0.800 10.200" fill="none" stroke="#444" stroke-width="1.700"/></svg>Закрыть</div>
</body></html>
